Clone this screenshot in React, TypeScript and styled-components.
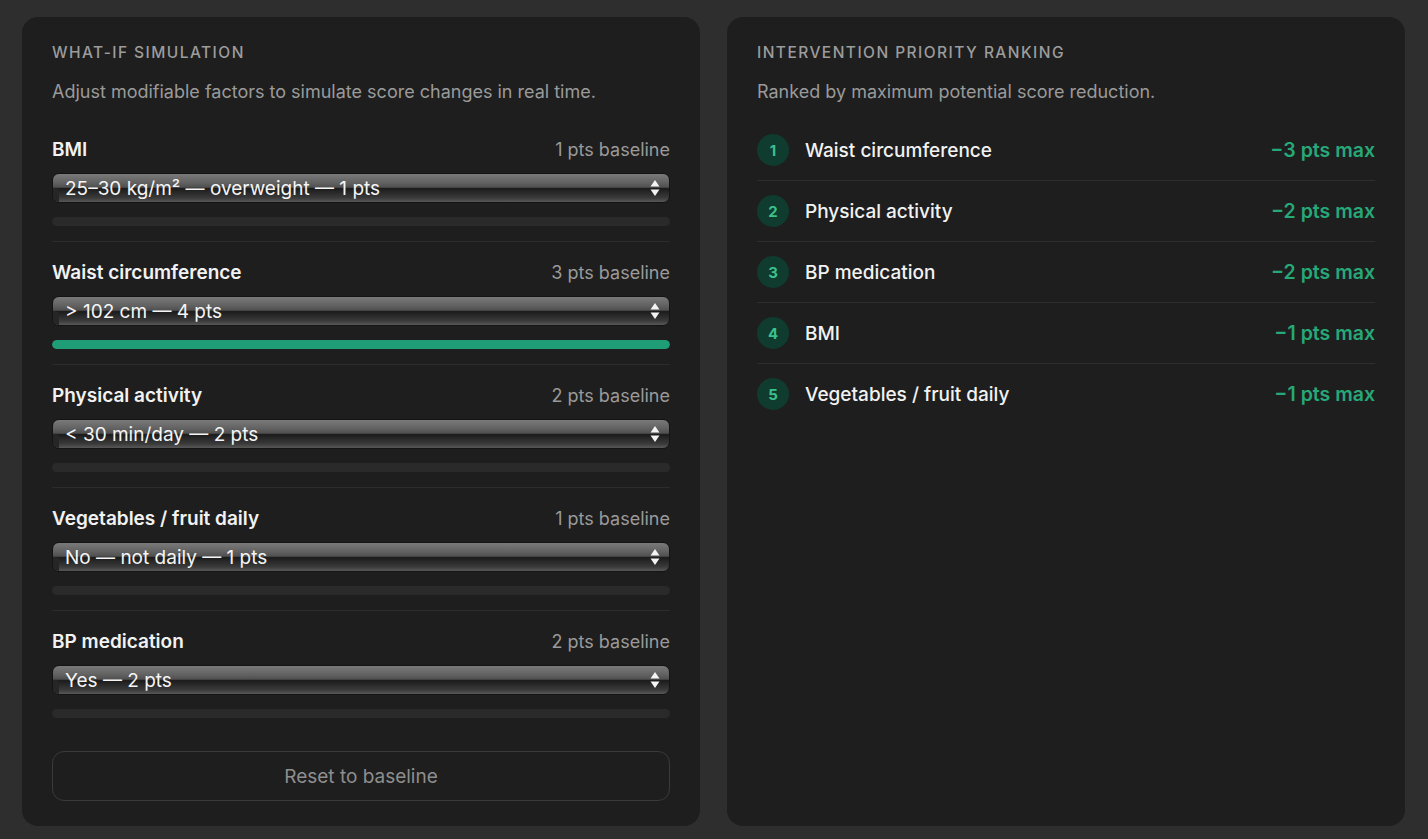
import React, { useState } from "react";
import { styled, createGlobalStyle } from "styled-components";

const GlobalStyle = createGlobalStyle`
  html, body {
    margin: 0;
    padding: 0;
    background: #2e2e2e;
  }
  body {
    font-family: Inter, "Noto Sans", sans-serif;
    -webkit-font-smoothing: antialiased;
  }
`;

const Page = styled.div`
  display: grid;
  grid-template-columns: 1fr 1fr;
  gap: 27px;
  padding: 17px 23px 14px 22px;
  align-items: stretch;
`;

const Card = styled.section`
  background: #1e1e1e;
  border-radius: 16px;
  padding: 26px 30px 25px 30px;
  display: flex;
  flex-direction: column;
`;

const Eyebrow = styled.h2`
  margin: 0;
  font-size: 15.5px;
  font-weight: 500;
  letter-spacing: 1.45px;
  color: #9c9c9c;
  line-height: 20px;
`;

const Subtitle = styled.p`
  margin: 17px 0 0 0;
  font-size: 18px;
  color: #9a9a9a;
  line-height: 24px;
`;

const FactorList = styled.div`
  margin-top: 15px;
  display: flex;
  flex-direction: column;
`;

const FactorRow = styled.div`
  padding: 19px 0 15px 0;
  border-bottom: 1px solid #2c2c2c;

  &:last-child {
    border-bottom: none;
  }
`;

const FactorHead = styled.div`
  display: flex;
  justify-content: space-between;
  align-items: baseline;
  height: 22px;
`;

const FactorName = styled.span`
  font-size: 19px;
  font-weight: 600;
  color: #f2f2f2;
`;

const Baseline = styled.span`
  font-size: 18px;
  color: #9a9a9a;
`;

const SelectWrap = styled.div`
  position: relative;
  margin-top: 13px;
  height: 30px;
  border-radius: 7px;
  border: 1px solid #141414;
  box-sizing: border-box;
  overflow: hidden;
  background: linear-gradient(
    to bottom,
    #7a7a7a 0%,
    #626262 30%,
    #505050 47%,
    #1b1b1b 52%,
    #252525 62%,
    #3a3a3a 85%,
    #585858 100%
  );

  &::before {
    content: "";
    position: absolute;
    left: 0;
    top: 50%;
    bottom: 0;
    width: 6px;
    background: #262626;
    border-top-right-radius: 4px;
  }
`;

const NativeSelect = styled.select`
  appearance: none;
  -webkit-appearance: none;
  position: relative;
  width: 100%;
  height: 100%;
  border: none;
  background: transparent;
  color: #f5f5f5;
  font-family: Inter, "Noto Sans", sans-serif;
  font-size: 19px;
  padding: 0 30px 0 12px;
  outline: none;

  option {
    background: #2a2a2a;
    color: #f5f5f5;
  }
`;

const Arrows = styled.svg`
  position: absolute;
  right: 9px;
  top: 50%;
  transform: translateY(-50%);
  pointer-events: none;
`;

const Track = styled.div`
  margin-top: 14px;
  height: 9px;
  border-radius: 5px;
  background: #2a2a2a;
  overflow: hidden;
`;

const Fill = styled.div`
  height: 100%;
  border-radius: 5px;
  background: #1f9d76;
`;

const ResetButton = styled.button`
  margin-top: 18px;
  height: 50px;
  border-radius: 12px;
  border: 1px solid #3a3a3a;
  background: transparent;
  color: #8e8e8e;
  font-family: Inter, "Noto Sans", sans-serif;
  font-size: 19px;
  cursor: pointer;
`;

const RankList = styled.ol`
  list-style: none;
  margin: 16px 0 0 0;
  padding: 0;
`;

const RankRow = styled.li`
  display: flex;
  align-items: center;
  padding: 14px 0;
  border-bottom: 1px solid #2e2e2e;

  &:last-child {
    border-bottom: none;
  }
`;

const Badge = styled.span`
  width: 32px;
  height: 32px;
  border-radius: 50%;
  background: #103b2f;
  color: #3cc08c;
  font-size: 15px;
  font-weight: 700;
  display: flex;
  align-items: center;
  justify-content: center;
  flex-shrink: 0;
`;

const RankName = styled.span`
  margin-left: 16px;
  flex: 1;
  font-size: 19px;
  font-weight: 500;
  color: #f2f2f2;
`;

const RankValue = styled.span`
  font-size: 19.5px;
  font-weight: 600;
  color: #27a878;
`;

interface Factor {
  name: string;
  baseline: number;
  options: string[];
  value: string;
  fill: number;
}

const factors: Factor[] = [
  {
    name: "BMI",
    baseline: 1,
    options: ["< 25 kg/m² — 0 pts", "25–30 kg/m² — overweight — 1 pts", "> 30 kg/m² — obese — 3 pts"],
    value: "25–30 kg/m² — overweight — 1 pts",
    fill: 0,
  },
  {
    name: "Waist circumference",
    baseline: 3,
    options: ["< 94 cm — 0 pts", "94–102 cm — 3 pts", "> 102 cm — 4 pts"],
    value: "> 102 cm — 4 pts",
    fill: 100,
  },
  {
    name: "Physical activity",
    baseline: 2,
    options: ["≥ 30 min/day — 0 pts", "< 30 min/day — 2 pts"],
    value: "< 30 min/day — 2 pts",
    fill: 0,
  },
  {
    name: "Vegetables / fruit daily",
    baseline: 1,
    options: ["Yes — daily — 0 pts", "No — not daily — 1 pts"],
    value: "No — not daily — 1 pts",
    fill: 0,
  },
  {
    name: "BP medication",
    baseline: 2,
    options: ["No — 0 pts", "Yes — 2 pts"],
    value: "Yes — 2 pts",
    fill: 0,
  },
];

const ranking = [
  { name: "Waist circumference", max: 3 },
  { name: "Physical activity", max: 2 },
  { name: "BP medication", max: 2 },
  { name: "BMI", max: 1 },
  { name: "Vegetables / fruit daily", max: 1 },
];

const UpDown = () => (
  <Arrows width="10" height="18" viewBox="0 0 10 18">
    <path d="M5 1 L9.5 7.5 H0.5 Z" fill="#f4f4f4" />
    <path d="M5 17 L9.5 10.5 H0.5 Z" fill="#f4f4f4" />
  </Arrows>
);

export default function App() {
  const [values, setValues] = useState(factors.map((f) => f.value));

  return (
    <>
      <GlobalStyle />
      <Page>
        <Card>
          <Eyebrow>WHAT-IF SIMULATION</Eyebrow>
          <Subtitle>Adjust modifiable factors to simulate score changes in real time.</Subtitle>
          <FactorList>
            {factors.map((f, i) => (
              <FactorRow key={f.name}>
                <FactorHead>
                  <FactorName>{f.name}</FactorName>
                  <Baseline>{f.baseline} pts baseline</Baseline>
                </FactorHead>
                <SelectWrap>
                  <NativeSelect
                    value={values[i]}
                    onChange={(e) => {
                      const next = [...values];
                      next[i] = e.target.value;
                      setValues(next);
                    }}
                  >
                    {f.options.map((o) => (
                      <option key={o} value={o}>
                        {o}
                      </option>
                    ))}
                  </NativeSelect>
                  <UpDown />
                </SelectWrap>
                <Track>
                  <Fill style={{ width: `${f.fill}%` }} />
                </Track>
              </FactorRow>
            ))}
          </FactorList>
          <ResetButton onClick={() => setValues(factors.map((f) => f.value))}>
            Reset to baseline
          </ResetButton>
        </Card>
        <Card>
          <Eyebrow>INTERVENTION PRIORITY RANKING</Eyebrow>
          <Subtitle>Ranked by maximum potential score reduction.</Subtitle>
          <RankList>
            {ranking.map((r, i) => (
              <RankRow key={r.name}>
                <Badge>{i + 1}</Badge>
                <RankName>{r.name}</RankName>
                <RankValue>−{r.max} pts max</RankValue>
              </RankRow>
            ))}
          </RankList>
        </Card>
      </Page>
    </>
  );
}
